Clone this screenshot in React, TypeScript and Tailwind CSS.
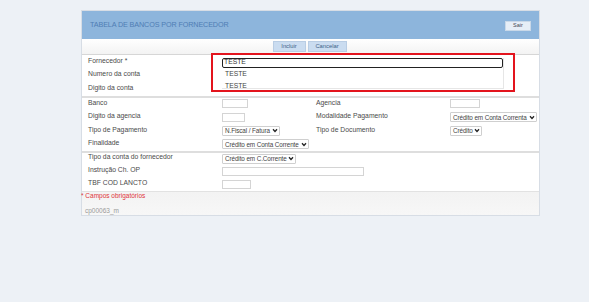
const font = { fontFamily: '"Liberation Sans", Arial, sans-serif' };

function TextBox({ w }: { w: string }) {
  return <div className={`${w} h-[9px] bg-white border border-[#d4d4d4]`} />;
}

function Select({ label, w }: { label: string; w: string }) {
  return (
    <div className={`${w} h-[10px] bg-white border border-[#cfcfcf] rounded-[1px] flex items-center justify-between gap-[1px] pl-[2px] pr-[1px] text-[6.35px] tracking-[-0.1px] text-[#444] overflow-hidden`}>
      <span className="whitespace-nowrap">{label}</span>
      <svg width="6" height="5" viewBox="0 0 6 5" className="shrink-0">
        <path d="M1 1.3 L3 3.5 L5 1.3" fill="none" stroke="#222" strokeWidth="1.3" />
      </svg>
    </div>
  );
}

function Row({ children }: { children: React.ReactNode }) {
  return <div className="grid grid-cols-[134px_94px_134px_1fr] h-[13.5px] items-center">{children}</div>;
}

function Label({ text }: { text: React.ReactNode }) {
  return <span className="text-[6.8px] text-[#4a4a4a] whitespace-nowrap -mt-[2px]">{text}</span>;
}

export default function App() {
  return (
    <div className="w-[589px] h-[302px] bg-[#edf1f6] pt-[10px] overflow-hidden" style={font}>
      <div className="ml-[81px] w-[459px] border border-[#d7dde5] bg-white relative">
        {/* header */}
        <div className="h-[28px] bg-[#8db5dc] flex items-center justify-between pl-[8px] pr-[8px]">
          <span className="text-[7.2px] text-[#4f7db4] tracking-[-0.1px]">TABELA DE BANCOS POR FORNECEDOR</span>
          <button className="w-[26px] h-[10px] bg-[#e6eef7] border border-[#c9d8e8] text-[5.5px] text-[#445] leading-none mt-[2px]">Sair</button>
        </div>

        {/* buttons */}
        <div className="h-[16px] flex justify-center items-center gap-[2px] bg-gradient-to-b from-white to-[#f3f3f3] border-b border-[#d6d6d6] pr-[2px]">
          <button className="w-[33px] h-[11px] bg-[#cadcf0] border border-[#b9cde4] text-[5.8px] text-[#3e5f87] leading-none">Incluir</button>
          <button className="w-[39px] h-[11px] bg-[#cadcf0] border border-[#b9cde4] text-[5.8px] text-[#3e5f87] leading-none">Cancelar</button>
        </div>

        <div className="pl-[6px]">
          <div className="h-[41px] flex flex-col justify-center">
            <Row><Label text="Fornecedor *" /></Row>
            <Row><Label text="Numero da conta" /></Row>
            <Row><Label text="Digito da conta" /></Row>
          </div>
        </div>
        <div className="h-[2px] bg-[#dedede]" />

        <div className="pl-[6px] h-[54px] -mt-[1px]">
          <Row>
            <Label text="Banco" />
            <TextBox w="w-[26px]" />
            <Label text="Agencia" />
            <TextBox w="w-[30px]" />
          </Row>
          <Row>
            <Label text="Digito da agencia" />
            <TextBox w="w-[23px]" />
            <Label text="Modalidade Pagamento" />
            <Select label="Crédito em Conta Correnta" w="w-[87px]" />
          </Row>
          <Row>
            <Label text="Tipo de Pagamento" />
            <Select label="N.Fiscal / Fatura" w="w-[58px]" />
            <Label text="Tipo de Documento" />
            <Select label="Crédito" w="w-[32px]" />
          </Row>
          <Row>
            <Label text="Finalidade" />
            <Select label="Crédito em Conta Corrente" w="w-[87px]" />
          </Row>
        </div>
        <div className="h-[2px] bg-[#dedede]" />

        <div className="pl-[6px] h-[39px] flex flex-col justify-center -mt-[1px]">
          <Row>
            <Label text="Tipo da conta do fornecedor" />
            <Select label="Crédito em C.Corrente" w="w-[74px]" />
          </Row>
          <Row>
            <Label text="Instrução Ch. OP" />
            <TextBox w="w-[142px]" />
          </Row>
          <Row>
            <Label text="TBF COD LANCTO" />
            <TextBox w="w-[29px]" />
          </Row>
        </div>

        {/* footer */}
        <div className="bg-gradient-to-b from-[#f3f3f3] to-[#f7f7f7] border-t border-[#e2e2e2] h-[24px]">
          <div className="text-[6.5px] text-[#e0353b] leading-none pt-[1px] -ml-[1px]">* Campos obrigatórios</div>
          <div className="text-[6.5px] text-[#9a9a9a] leading-none pt-[8px] pl-[3px]">cp00063_m</div>
        </div>

        {/* open combo with annotation */}
        <div className="absolute left-[129px] top-[42px] w-[304px] h-[39px] border-2 border-[#e3141d]">
          <div className="absolute left-[9px] top-[3px] w-[282px] h-[31px] bg-white border-r border-b border-[#e6e6e6]">
            <div className="h-[9.5px] border border-[#222] rounded-[2px] text-[6.8px] text-[#333] leading-none flex items-center pl-[1px]">TESTE</div>
            <div className="text-[6.8px] text-[#444] leading-none pl-[3px] pt-[3.5px]">TESTE</div>
            <div className="text-[6.8px] text-[#444] leading-none pl-[3px] pt-[5px]">TESTE</div>
          </div>
        </div>
      </div>
    </div>
  );
}
